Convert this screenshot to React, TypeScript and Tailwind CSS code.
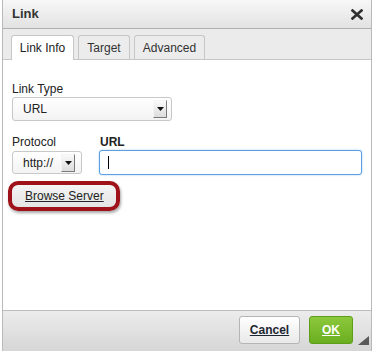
import React from "react";

function Arrow() {
  return (
    <div className="flex h-[18px] w-[14px] items-center justify-center border border-t-[#f4f4f4] border-l-[#f4f4f4] border-r-[#7a7a7a] border-b-[#7a7a7a] bg-gradient-to-b from-[#fafafa] to-[#dcdcdc]">
      <svg width="7" height="4" viewBox="0 0 7 4">
        <polygon points="0,0 7,0 3.5,4" fill="#111" />
      </svg>
    </div>
  );
}

export default function App() {
  return (
    <div
      className="h-[351px] w-[374px] bg-white text-[12px] text-[#222]"
      style={{ fontFamily: '"Liberation Sans", Arial, sans-serif' }}
    >
      <div className="ml-[2px] flex h-[351px] w-[370px] flex-col border-x border-[#b9b9b9]">
        {/* Title bar */}
        <div className="flex h-[29px] items-center justify-between border-b border-[#b0b0b0] bg-gradient-to-b from-[#f7f7f7] to-[#e2e2e2] pl-[9px] pr-[8px]">
          <span className="text-[13px] font-bold text-[#333]">Link</span>
          <svg width="12" height="11" viewBox="0 0 12 11">
            <path d="M1.5 1.5 L10.5 9.5 M10.5 1.5 L1.5 9.5" stroke="#2f2f2f" strokeWidth="2.6" strokeLinecap="square" />
          </svg>
        </div>
        {/* Tabs */}
        <div className="flex h-[31px] items-end gap-[4px] border-b border-[#c6c6c6] bg-[#ebebeb] pl-[8px]">
          <div className="-mb-px flex h-[25px] w-[63px] items-center justify-center rounded-t-[3px] border border-b-0 border-[#c6c6c6] bg-white">
            Link Info
          </div>
          <div className="flex h-[24px] w-[52px] items-center justify-center rounded-t-[3px] border border-b-0 border-[#c6c6c6] bg-[#ececec] text-[#333]">
            Target
          </div>
          <div className="flex h-[24px] w-[71px] items-center justify-center rounded-t-[3px] border border-b-0 border-[#c6c6c6] bg-[#ececec] text-[#333]">
            Advanced
          </div>
        </div>
        {/* Content */}
        <div className="flex h-[250px] flex-col bg-white pl-[9px] pt-[22px]">
          <div className="h-[14px] leading-[14px]">Link Type</div>
          <div className="mt-[1px] flex h-[24px] w-[160px] items-center justify-between rounded-[3px] border border-[#c8c8c8] bg-gradient-to-b from-white to-[#f3f3f3] pl-[10px] pr-[4px]">
            <span>URL</span>
            <Arrow />
          </div>
          <div className="mt-[14px] flex gap-[17px]">
            <div className="flex flex-col">
              <div className="h-[14px] leading-[14px]">Protocol</div>
              <div className="mt-[2px] flex h-[23px] w-[70px] items-center justify-between rounded-[3px] border border-[#c8c8c8] bg-gradient-to-b from-white to-[#f3f3f3] pl-[10px] pr-[6px]">
                <span>http://</span>
                <Arrow />
              </div>
            </div>
            <div className="flex flex-col">
              <div className="h-[14px] pl-[1px] font-bold leading-[14px]">URL</div>
              <div className="mt-[1px] flex h-[25px] w-[263px] items-center rounded-[3px] border border-[#5b9fe0] bg-white pl-[8px] shadow-[0_0_2px_#9cc6f0]">
                <div className="h-[13px] w-[1px] bg-black" />
              </div>
            </div>
          </div>
          <div className="-ml-[4px] mt-[6px] flex h-[30px] w-[112px] items-center rounded-[10px] border-[4px] border-[#a0121a] bg-gradient-to-b from-[#f4f4f4] to-[#e4e4e4] pl-[13px] shadow-[1px_2px_3px_rgba(0,0,0,0.35)]">
            <span className="underline">Browse Server</span>
          </div>
        </div>
        {/* Footer */}
        <div className="relative flex flex-1 items-start justify-end gap-[9px] border-t border-[#bdbdbd] bg-gradient-to-b from-[#ececec] to-[#d6d6d6] pr-[18px] pt-[5px]">
          <div className="flex h-[28px] w-[61px] items-center justify-center rounded-[3px] border border-[#b5b5b5] bg-gradient-to-b from-white to-[#e9e9e9] font-bold text-[#1d2733] underline">
            Cancel
          </div>
          <div className="flex h-[28px] w-[44px] items-center justify-center rounded-[3px] border border-[#5e9e1a] bg-gradient-to-b from-[#8cc83c] to-[#6aae1e] font-bold text-white underline">
            OK
          </div>
          <svg className="absolute bottom-[6px] right-[2px]" width="11" height="9" viewBox="0 0 11 9">
            <polygon points="11,0 11,9 0,9" fill="#5a5a5a" />
          </svg>
        </div>
      </div>
    </div>
  );
}
